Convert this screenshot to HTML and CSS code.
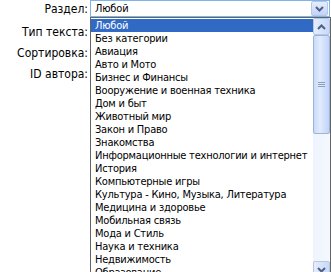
FILE: index.html
```html
<!DOCTYPE html>
<html lang="ru">
<head>
    <meta charset="UTF-8">
    <title>Поиск</title>
    <link rel="stylesheet" href="styles.css">
</head>
<body>
    <div class="form">
        <div class="row">
            <label class="label">Раздел:</label>
            <div class="select">
                <span class="select-value">Любой</span>
                <span class="select-arrow">
                    <svg width="9" height="6" viewBox="0 0 9 6"><path d="M1 1 L4.5 4.5 L8 1" fill="none" stroke="#4d6185" stroke-width="2"/></svg>
                </span>
            </div>
        </div>
        <div class="row"><label class="label">Тип текста:</label></div>
        <div class="row"><label class="label">Сортировка:</label></div>
        <div class="row"><label class="label">ID автора:</label></div>

        <div class="dropdown">
            <ul class="options">
                <li class="selected">Любой</li>
                <li>Без категории</li>
                <li>Авиация</li>
                <li>Авто и Мото</li>
                <li>Бизнес и Финансы</li>
                <li>Вооружение и военная техника</li>
                <li>Дом и быт</li>
                <li>Животный мир</li>
                <li>Закон и Право</li>
                <li>Знакомства</li>
                <li>Информационные технологии и интернет</li>
                <li>История</li>
                <li>Компьютерные игры</li>
                <li>Культура - Кино, Музыка, Литература</li>
                <li>Медицина и здоровье</li>
                <li>Мобильная связь</li>
                <li>Мода и Стиль</li>
                <li>Наука и техника</li>
                <li>Недвижимость</li>
                <li>Образование</li>
            </ul>
            <div class="scrollbar">
                <div class="sb-btn">
                    <svg width="9" height="6" viewBox="0 0 9 6"><path d="M1 5 L4.5 1.5 L8 5" fill="none" stroke="#4d6185" stroke-width="2"/></svg>
                </div>
                <div class="sb-thumb">
                    <svg width="7" height="6" viewBox="0 0 7 6"><path d="M0 0.5 H7 M0 2.5 H7 M0 4.5 H7" stroke="#8aa0c0" stroke-width="1"/></svg>
                </div>
                <div class="sb-track"></div>
                <div class="sb-btn">
                    <svg width="9" height="6" viewBox="0 0 9 6"><path d="M1 1 L4.5 4.5 L8 1" fill="none" stroke="#4d6185" stroke-width="2"/></svg>
                </div>
            </div>
        </div>
    </div>
</body>
</html>
```

FILE: styles.css
```css
html, body {
    height: 100%;
}

body {
    margin: 0;
    background: #ffffff;
    font-family: Tahoma, "DejaVu Sans Condensed", "Liberation Sans", sans-serif;
    font-size: 11px;
    color: #000000;
}

.form {
    position: relative;
    height: 272px;
    overflow: hidden;
}

.row {
    display: flex;
    align-items: center;
    height: 21px;
}

.row:first-child {
    height: 17px;
    margin-bottom: 4px;
}

.label {
    width: 88px;
    text-align: right;
    padding-right: 2px;
    font-size: 12px;
}

.select {
    display: flex;
    align-items: center;
    justify-content: space-between;
    width: 234px;
    height: 15px;
    border: 1px solid #7eb4ea;
    padding-left: 4px;
    letter-spacing: -0.2px;
}

.select-value {
    line-height: 15px;
}

.select-arrow {
    display: flex;
    align-items: center;
    justify-content: center;
    width: 15px;
    height: 13px;
    margin-right: 1px;
    border: 1px solid #b4c8e4;
    border-radius: 2px;
    background: linear-gradient(#e6eefc, #c1d3fb);
}

.dropdown {
    position: absolute;
    top: 17px;
    left: 90px;
    width: 239px;
    height: 260px;
    border: 1px solid #646464;
    border-bottom: none;
    background: #ffffff;
    display: flex;
}

.options {
    list-style: none;
    margin: 0;
    padding: 0;
    flex: 1;
    letter-spacing: -0.22px;
}

.options li {
    height: 13px;
    line-height: 13px;
    padding-left: 4px;
    white-space: nowrap;
}

.options li.selected {
    margin-top: 1px;
    background: #316ac5;
    color: #ffffff;
}

.scrollbar {
    width: 17px;
    display: flex;
    flex-direction: column;
    background: linear-gradient(to right, #eef3fd, #f5f8fe);
}

.sb-btn {
    display: flex;
    align-items: center;
    justify-content: center;
    height: 15px;
    border: 1px solid #b4c8e4;
    border-radius: 2px;
    background: linear-gradient(to right, #e6eefc, #c8d8f8);
}

.sb-thumb {
    display: flex;
    align-items: center;
    justify-content: center;
    height: 97px;
    border: 1px solid #9bb4d8;
    border-radius: 2px;
    background: linear-gradient(to right, #c9daf8, #e2ebfc 40%, #c1d3fb);
}

.sb-track {
    flex: 1;
}
```
